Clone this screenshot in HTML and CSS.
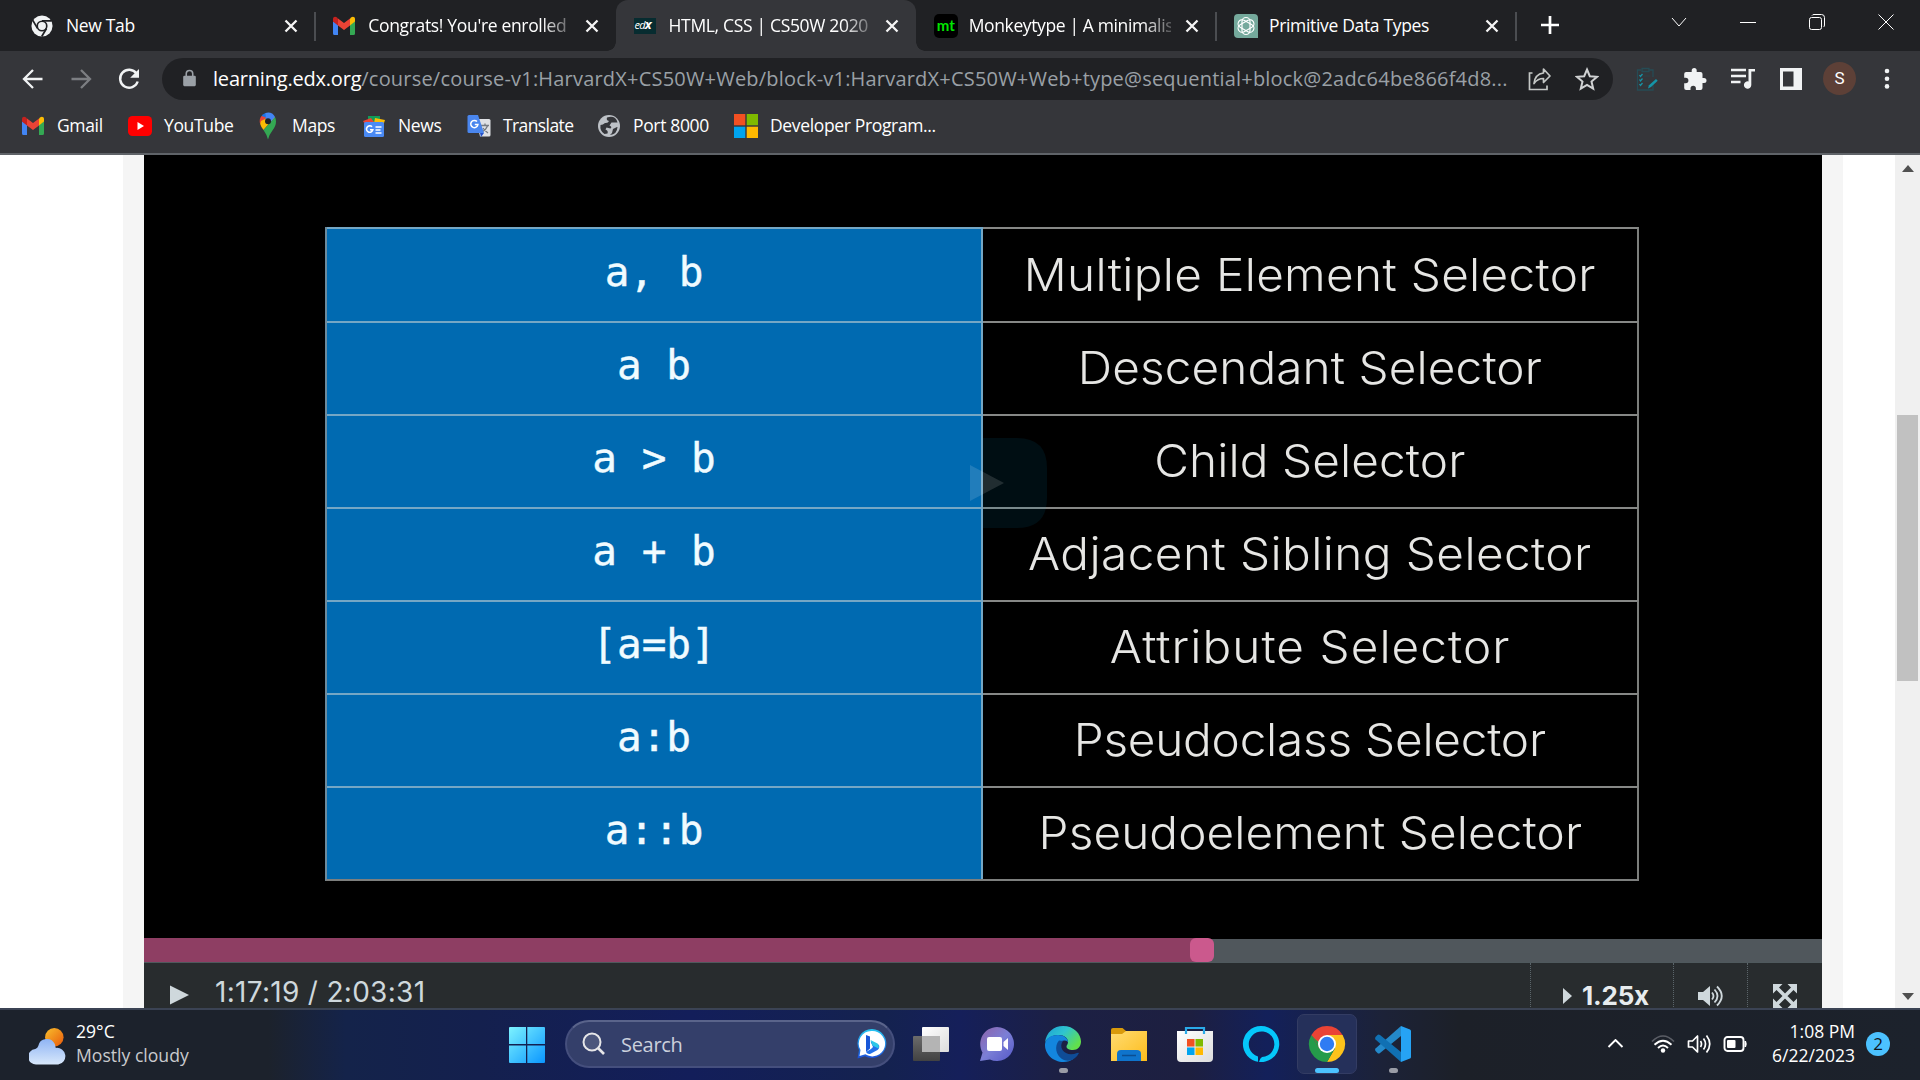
FILE: index.html
```html
<!DOCTYPE html>
<html lang="en">
<head>
<meta charset="utf-8">
<title>HTML, CSS | CS50W 2020</title>
<link rel="stylesheet" href="styles.css">
</head>
<body>
<svg width="0" height="0" class="defs">
  <defs>
    <linearGradient id="win" x1="0" y1="0" x2="1" y2="1"><stop offset="0" stop-color="#7df3ff"/><stop offset="1" stop-color="#0a96ff"/></linearGradient>
    <linearGradient id="bing" x1="0" y1="0" x2="0" y2="1"><stop offset="0" stop-color="#27c7f2"/><stop offset="1" stop-color="#1b4fd8"/></linearGradient>
    <linearGradient id="front" x1="0" y1="0" x2="1" y2="1"><stop offset="0" stop-color="#fff"/><stop offset="1" stop-color="#dcdcdc"/></linearGradient>
    <linearGradient id="back" x1="0" y1="0" x2="0" y2="1"><stop offset="0" stop-color="#6b6b6b"/><stop offset="1" stop-color="#424242"/></linearGradient>
    <linearGradient id="chat" x1="0" y1="0" x2="1" y2="1"><stop offset="0" stop-color="#8e62a8"/><stop offset=".5" stop-color="#7b7fd6"/><stop offset="1" stop-color="#5558c8"/></linearGradient>
    <linearGradient id="edgeA" x1="0" y1="0" x2="1" y2=".6"><stop offset="0" stop-color="#1b9fd6"/><stop offset=".5" stop-color="#2fc4cf"/><stop offset="1" stop-color="#62e04b"/></linearGradient>
    <linearGradient id="fold" x1="0" y1="0" x2="1" y2="1"><stop offset="0" stop-color="#ffdc72"/><stop offset="1" stop-color="#fdbc1b"/></linearGradient>
    <linearGradient id="sun" x1="0" y1="0" x2="1" y2="1"><stop offset="0" stop-color="#f9c02c"/><stop offset="1" stop-color="#e8590c"/></linearGradient>
    <linearGradient id="cloud" x1="0" y1="0" x2="0" y2="1"><stop offset="0" stop-color="#8fb4f4"/><stop offset="1" stop-color="#d8e8fb"/></linearGradient>
    <symbol id="gmail" viewBox="0 0 22 20">
      <path d="M0 3v14.500q0 1.500 1.500 1.500H5V9L0 5z" fill="#4285f4"/>
      <path d="M22 3v14.500q0 1.500-1.500 1.500H17V9l5-4z" fill="#34a853"/>
      <path d="M17 2.500V9.500l5-4V3c0-2.500-2.500-3-4-1.500z" fill="#fbbc04"/>
      <path d="M5 2.500v7l6 4.500 6-4.500v-7L11 7z" fill="#ea4335"/>
      <path d="M5 2.500v7L0 5.500V3c0-2.500 2.500-3 4-1.500z" fill="#c5221f"/>
    </symbol>
    <symbol id="close" viewBox="0 0 14 14"><path d="M1.500 1.500l11 11M12.500 1.500l-11 11" stroke="#f5f5f5" stroke-width="2.300" fill="none"/></symbol>
    <symbol id="mslogo" viewBox="0 0 24 24"><path d="M0 0h11.300v11.300H0z" fill="#f25022"/><path d="M12.700 0H24v11.300H12.700z" fill="#7fba00"/><path d="M0 12.700h11.300V24H0z" fill="#00a4ef"/><path d="M12.700 12.700H24V24H12.700z" fill="#ffb900"/></symbol>
  </defs>
</svg>
<div class="screen">
  <header class="tabstrip">
    <div class="tab first">
      <svg class="fav" viewBox="0 0 24 24"><circle cx="12" cy="12" r="11.500" fill="#f1f3f4"/><circle cx="12" cy="12" r="5.200" fill="none" stroke="#202124" stroke-width="1.800"/><path d="M12 6.300h10.500M7.100 14.600L2 5.800M16.900 14.800L11.700 23.500" stroke="#202124" stroke-width="1.900" fill="none"/></svg>
      <span class="tab-title">New Tab</span><svg class="x"><use href="#close"/></svg>
    </div>
    <div class="tab">
      <svg class="fav gm"><use href="#gmail"/></svg>
      <span class="tab-title fade">Congrats! You're enrolled</span><svg class="x"><use href="#close"/></svg>
    </div>
    <div class="tab active">
      <span class="edx">ed<b>x</b></span>
      <span class="tab-title fade">HTML, CSS | CS50W 2020</span><svg class="x"><use href="#close"/></svg>
    </div>
    <div class="tab">
      <span class="mt">mt</span>
      <span class="tab-title fade tight">Monkeytype | A minimalis</span><svg class="x"><use href="#close"/></svg>
    </div>
    <div class="tab">
      <svg class="gpt" viewBox="0 0 24 24"><path d="M4 0h16q4 0 4 4v20H4q-4 0-4-4V4q0-4 4-4z" fill="#75a99c"/><g fill="none" stroke="#fff" stroke-width="1.200"><rect id="loop" x="8" y="3.500" width="8" height="17" rx="4"/><use href="#loop" transform="rotate(60 12 12)"/><use href="#loop" transform="rotate(120 12 12)"/></g></svg>
      <span class="tab-title">Primitive Data Types</span><svg class="x"><use href="#close"/></svg>
    </div>
    <svg class="plus" viewBox="0 0 18 18"><path d="M9 0v18M0 9h18" stroke="#fff" stroke-width="2.700"/></svg>
    <div class="winctl">
      <svg width="16" height="10" viewBox="0 0 16 10"><path d="M1 1l7 8 7-8" fill="none" stroke="#fff"/></svg>
      <svg width="16" height="16" viewBox="0 0 16 16"><path d="M0 8.500h16" stroke="#fff"/></svg>
      <svg width="16" height="16" viewBox="0 0 16 16"><rect x=".5" y="3.500" width="12" height="12" rx="2" fill="none" stroke="#fff"/><path d="M3 1.500Q3.500.5 5 .5h7.500q3 0 3 3V11q0 1.500-1 2" fill="none" stroke="#fff"/></svg>
      <svg width="16" height="16" viewBox="0 0 16 16"><path d="M.5.5l15 15M15.500.5l-15 15" stroke="#fff"/></svg>
    </div>
  </header>

  <div class="toolbar">
    <svg class="nav" viewBox="0 0 24 24"><path d="M21.500 12H3.500M12 3l-9 9 9 9" fill="none" stroke="#f1f3f4" stroke-width="2.300"/></svg>
    <svg class="nav" viewBox="0 0 24 24"><path d="M2.500 12h18M12 3l9 9-9 9" fill="none" stroke="#7c7e82" stroke-width="2.300"/></svg>
    <svg class="nav" viewBox="0 0 24 24"><path d="M19.500 6.500A9 9 0 1 0 20.700 14.500" fill="none" stroke="#f1f3f4" stroke-width="2.400"/><path d="M22 2v8.800h-8.800z" fill="#f1f3f4"/></svg>
    <div class="omnibox">
      <svg class="lock" viewBox="0 0 14 18"><path d="M1.500 6.500h11q1.300 0 1.300 1.300v8.400q0 1.600-1.300 1.600h-11q-1.300 0-1.300-1.600V7.800q0-1.300 1.300-1.300z" fill="#9aa0a6"/><path d="M3.500 7V4.500a3.500 3.500 0 0 1 7 0V7" fill="none" stroke="#9aa0a6" stroke-width="1.700"/></svg>
      <span class="url"><b>learning.edx.org</b>/course/course-v1:HarvardX+CS50W+Web/block-v1:HarvardX+CS50W+Web+type@sequential+block@2adc64be866f4d8...</span>
      <svg class="share" viewBox="0 0 24 24"><path d="M4.500 6H1.500v16.500h17.500V18.500" fill="none" stroke="#c4c7c5" stroke-width="1.700"/><path d="M15.500 2l6.500 7-6.500 6.500v-4q-6 0-9.500 5 1-9.500 9.500-10.500z" fill="none" stroke="#c4c7c5" stroke-width="1.700" stroke-linejoin="round"/></svg>
      <svg class="star" viewBox="0 0 24 24"><path d="M12 2.500l2.800 6.700 7.200.6-5.500 4.700 1.700 7.100-6.200-3.800-6.200 3.800 1.700-7.100L2 9.800l7.200-.6z" fill="none" stroke="#d0d2d3" stroke-width="2"/></svg>
    </div>
    <div class="exts">
      <svg viewBox="0 0 24 24"><path d="M6 3H2.500v20H18V17M14 3h4v7M7 1.500h7v3H7z" fill="none" stroke="#264c55" stroke-width="1.300"/><path d="M8.500 9h7M8.500 14h6M8.500 19h4" stroke="#2c4147" stroke-width="1.200"/><path d="M4.500 8l1 1.500 2-2.500M4.500 12.500l1 1.500 2-2.500M4.500 17l1 1.500 2-2.500" fill="none" stroke="#1693a5" stroke-width="1.300"/><path d="M13 21.500l1-3.200 7-6.300 1.700 1.700-6.700 6.300z" fill="#1595a8"/></svg>
      <svg viewBox="0 0 24 24"><path d="M21 11h-1.500V7a2 2 0 0 0-2-2H13.700V3.500a2.500 2.500 0 0 0-5 0V5H3.200a2 2 0 0 0-2 2v3.800h1.500a2.700 2.700 0 0 1 0 5.400H1.200V21a2 2 0 0 0 2 2h4.300v-1.500a2.700 2.700 0 0 1 5.400 0V23h4.600a2 2 0 0 0 2-2v-5H21a2.500 2.500 0 0 0 0-5z" fill="#f1f3f4"/></svg>
      <svg viewBox="0 0 24 24"><path d="M0 3h15M0 9h15M0 15h9.500" stroke="#f1f3f4" stroke-width="2.300"/><path d="M17.500 2H24v2.500h-3.700v13.500a3.700 3.700 0 1 1-2.800-3.600z" fill="#f1f3f4"/></svg>
      <svg viewBox="0 0 24 24"><path d="M1 1h22v22H1zM4 4.500v15h10.500v-15z" fill="#f1f3f4" fill-rule="evenodd"/></svg>
      <span class="avatar">S</span>
      <svg class="dots" viewBox="0 0 6 24"><circle cx="3" cy="4" r="2.300" fill="#f1f3f4"/><circle cx="3" cy="11.700" r="2.300" fill="#f1f3f4"/><circle cx="3" cy="19.400" r="2.300" fill="#f1f3f4"/></svg>
    </div>
  </div>

  <nav class="bookmarks">
    <div class="bm b1"><svg class="bi"><use href="#gmail"/></svg><span>Gmail</span></div>
    <div class="bm b2"><svg class="bi" viewBox="0 0 24 20"><rect y="0" width="24" height="20" rx="4.500" fill="#f00"/><path d="M9.500 6v8l6.500-4z" fill="#fff"/></svg><span>YouTube</span></div>
    <div class="bm b3"><svg class="bi" viewBox="0 0 24 28"><path d="M9.500 1A9 9 0 0 0 5.500 4L10 9l4-7z" fill="#1a73e8"/><path d="M5.500 4A8.500 8.500 0 0 0 4.200 12l6-6.500z" fill="#ea4335"/><path d="M4.200 12Q5 15 7.500 18L19 5l-8 1-6 3z" fill="#fbbc04"/><path d="M7.500 18q3.200 4.500 4.500 9.500 1.300-5 4.300-8.700Q20 14 20 9.500 20 7 19 5z" fill="#34a853"/><path d="M9.500 1q6.500-1.700 9.500 4l-5.500 6L10 9z" fill="#4285f4"/><circle cx="12" cy="9.300" r="3" fill="#202124"/></svg><span>Maps</span></div>
    <div class="bm b4"><svg class="bi" viewBox="0 0 24 24"><path d="M6 2h12v8H6z" fill="#0f9d58"/><path d="M1 7l8-3 6 8H4z" fill="#ea4335"/><path d="M13 4l10 2-3 9h-9z" fill="#fbbc04"/><rect x="2" y="8" width="20" height="15" rx="1.500" fill="#4a8af4"/><path d="M10 12.800a3.200 3.200 0 1 0 .8 3H8M13.500 13h6M13.500 16h5M13.500 19h6" fill="none" stroke="#fff" stroke-width="1.600"/></svg><span>News</span></div>
    <div class="bm b5"><svg class="bi" viewBox="0 0 24 24"><path d="M9 5h13q1.500 0 1.500 1.500V21q0 1.500-1.500 1.500h-9z" fill="#dfe1e5"/><path d="M14 11.500h8M18 9.500v2M20.500 12q-1.500 4-5.500 6M16 14q2 3 5 5" fill="none" stroke="#757b83" stroke-width="1.300"/><path d="M2 1h9l6 18H2Q.5 19 .5 17.500v-15Q.5 1 2 1z" fill="#4a86ee"/><path d="M13 19h4l-3 4z" fill="#2350c8"/><path d="M10 7.600a3.600 3.600 0 1 0 .9 3H7.800" fill="none" stroke="#fff" stroke-width="1.500"/></svg><span>Translate</span></div>
    <div class="bm b6"><svg class="bi" viewBox="0 0 24 24"><circle cx="12" cy="12" r="11" fill="#bdc1c6"/><path d="M10 3.500q-1 3 2 3.500-1 2.500-4 2-2 2-4.500 2-1 6 4 9l3-.5q1-3-2-4l1-2 4 1q2-1.500-1-3l2-3h6q-.500-3-2.500-4.500-3-2-8-.5zM20 13l-4 2-1 4-2 2q7-.500 7.500-8z" fill="#35363a"/></svg><span>Port 8000</span></div>
    <div class="bm b7"><svg class="bi"><use href="#mslogo"/></svg><span>Developer Program...</span></div>
  </nav>

  <main class="page">
    <div class="gutter left"></div>
    <section class="player">
      <div class="video">
        <div class="slide">
          <div class="code">a, b</div><div class="name n1"><span>Multiple Element Selector</span></div>
          <div class="code">a b</div><div class="name n2"><span>Descendant Selector</span></div>
          <div class="code">a &gt; b</div><div class="name n3"><span>Child Selector</span></div>
          <div class="code">a + b</div><div class="name n4"><span>Adjacent Sibling Selector</span></div>
          <div class="code">[a=b]</div><div class="name n5"><span>Attribute Selector</span></div>
          <div class="code">a:b</div><div class="name n6"><span>Pseudoclass Selector</span></div>
          <div class="code">a::b</div><div class="name n7"><span>Pseudoelement Selector</span></div>
        </div>
        <svg class="bigplay" viewBox="0 0 130 90"><path d="M66 0h34q30 0 30 30v30q0 30-30 30H66z" fill="#05a0d0" fill-opacity=".09"/><path d="M53 27v36l34-18z" fill="#fff" fill-opacity=".13"/></svg>
      </div>
      <div class="progress"><div class="played"></div><div class="knob"></div></div>
      <div class="controls">
        <svg class="play" viewBox="0 0 20 20"><path d="M0 0v20l20-10z" fill="#cfd8dc"/></svg>
        <span class="time">1:17:19 / 2:03:31</span>
        <div class="ctl speed"><svg width="9" height="16" viewBox="0 0 9 16"><path d="M0 0v16l9-8z" fill="#cfd8dc"/></svg><span>1.25x</span></div>
        <div class="ctl vol"><svg width="26" height="22" viewBox="0 0 26 22"><path d="M0 7h5l7-6v20l-7-6H0z" fill="#cfd8dc"/><path d="M14 7.500q3 3.500 0 7M16.500 4.500q6 6.500 0 13M19 1.500q9.500 9.500 0 19" fill="none" stroke="#cfd8dc" stroke-width="1.800"/></svg></div>
        <div class="ctl full"><svg width="24" height="24" viewBox="0 0 24 24"><path d="M4 4l16 16M20 4L4 20" stroke="#cfd8dc" stroke-width="3.600"/><path d="M0 0h9.500L0 9.500zM24 0v9.500L14.500 0zM0 24v-9.500L9.500 24zM24 24h-9.500l9.500-9.500z" fill="#cfd8dc"/></svg></div>
      </div>
    </section>
    <div class="gutter right"></div>
    <div class="scroll">
      <svg width="12" height="7" viewBox="0 0 12 7"><path d="M6 0l6 7H0z" fill="#505050"/></svg>
      <div class="thumb"></div>
      <svg width="12" height="7" viewBox="0 0 12 7"><path d="M6 7L0 0h12z" fill="#505050"/></svg>
    </div>
  </main>

  <footer class="taskbar">
    <div class="weather">
      <svg width="37" height="38" viewBox="0 0 38 38"><circle cx="26" cy="10" r="9.500" fill="url(#sun)"/><path d="M8 38a8 8 0 0 1-1.500-16Q9 21 9.500 19a9 9 0 0 1 17-2l1 4a8.500 8.500 0 0 1 2.500 17z" fill="url(#cloud)"/></svg>
      <div class="wtext"><span class="w1">29°C</span><span class="w2">Mostly cloudy</span></div>
    </div>
    <div class="apps">
      <svg class="start" viewBox="0 0 36 36"><path d="M1 0h16v17H0V1q0-1 1-1zM18.300 0H35q1 0 1 1v16H18.300zM0 18.500h17V36H1q-1 0-1-1zM18.300 18.500H36V35q0 1-1 1H18.300z" fill="url(#win)"/></svg>
      <div class="search">
        <svg width="24" height="24" viewBox="0 0 24 24"><circle cx="10" cy="10" r="8.500" fill="#fff" fill-opacity=".12" stroke="#e6e6e8" stroke-width="2"/><path d="M16 16l6 6" stroke="#e6e6e8" stroke-width="2.600"/></svg>
        <span>Search</span>
        <svg class="bing" viewBox="0 0 30 30"><path d="M15 0a14.500 14.500 0 1 1-7 27.300L.5 29.500 2 21A14.500 14.500 0 0 1 15 0z" fill="url(#bing)"/><path d="M15 2a12.700 12.700 0 1 1-6.600 23.300L2.500 27l1-6A12.700 12.700 0 0 1 15 2z" fill="#fff"/><path d="M9 6l4 1.500v12l-4 3.500z" fill="#1857d8"/><path d="M9 23l5-3 2-2-2.500-5.500L22 16q1 3-1.500 5L14 24.500q-3 1.500-5-1.500z" fill="#2270ea"/><path d="M13.500 11l7 3.500q2 1.500 1 5l-4-2-2-1z" fill="#2cc7e8"/></svg>
      </div>
      <div class="app a1"><svg viewBox="0 0 36 36"><rect x="0" y="10" width="27" height="25" rx="1" fill="url(#back)"/><rect x="9" y="1" width="27" height="25" rx="1" fill="url(#front)"/><path d="M9 10h18v16H9z" fill="#b4b4b4"/></svg></div>
      <div class="app a2"><svg viewBox="0 0 36 36"><path d="M18 1a17 17 0 1 1-7 32.500L1 35l2.500-8.500A17 17 0 0 1 18 1z" fill="url(#chat)"/><rect x="8" y="11" width="15" height="14" rx="2" fill="#fff"/><path d="M24.500 16l4.500-4v12l-4.500-4z" fill="#fff"/></svg></div>
      <div class="app a3"><svg viewBox="0 0 36 36"><path d="M0 17C1 6 9 0 18 0c11 0 18 8 18 15.500 0 5-3.500 8.500-8 8.500-4 0-6.500-1.500-6.500-3.500 0-1.500 1.500-2 1.500-4.500 0-4-4-7-9-7C7 9 1.500 12 0 17z" fill="url(#edgeA)"/><path d="M0 18C1 12 6 9 13 9c6 0 10 3.500 10 7q-3-2.500-7-.500c-4 2.500-4 10 1 14.500 4 3.500 8 4 12 2.500Q24 36 18.500 36C8 36-.5 28 0 18z" fill="#1386de"/><path d="M14 14.500c-5 6-3 14.500 3 18.500 5 3 10 1.500 13-1q2.500-2 4-5-1-.5-2 0c-6 2.500-12 1-14.500-3-2-3-1.500-6.500.5-9z" fill="#0f4c96"/></svg><i></i></div>
      <div class="app a4"><svg viewBox="0 0 36 36"><path d="M0 4q0-2 2-2h9.500l3.500 3v6H0z" fill="#d99a0b"/><path d="M0 8h11l4-3h21v30H0z" fill="url(#fold)"/><path d="M6 35v-7q0-4 4-4h16q4 0 4 4v7z" fill="#0f74cc"/><path d="M11 29.500h14" stroke="#0b4e92" stroke-width="1.500"/></svg></div>
      <div class="app a5"><svg viewBox="0 0 36 36"><path d="M0 5h36v27q0 4-4 4H4q-4 0-4-4z" fill="url(#front)"/><path d="M9 8V2h18v6" fill="none" stroke="#2aaae8" stroke-width="2.200"/><svg x="10" y="13" width="16" height="16"><use href="#mslogo"/></svg></svg></div>
      <div class="app a6"><svg viewBox="0 0 36 36"><path d="M18 0a18 18 0 1 1-3 35.700v-5.200A12.800 12.800 0 1 1 19 31q-2 1-3 4.900A18 18 0 0 1 18 0z" fill="#05c8fb" fill-rule="evenodd"/></svg></div>
      <div class="app a7 current"><svg viewBox="0 0 36 36"><path d="M18 18L2.400 9A18 18 0 0 1 33.600 9z" fill="#ea4335"/><path d="M18 18V9h15.600A18 18 0 0 1 18 36l7.800-13.500z" fill="#fcc21b"/><path d="M18 18l7.800 4.500L18 36A18 18 0 0 1 2.400 9l7.800 13.500z" fill="#259b4a"/><path d="M2.400 9l7.800 13.500L18 9z" fill="#ea4335"/><path d="M2.400 9l7.800 13.500L14 20 6 13z" fill="#259b4a"/><circle cx="18" cy="18" r="9" fill="#fff"/><circle cx="18" cy="18" r="7.200" fill="#2f7cf3"/></svg><i></i></div>
      <div class="app a8"><svg viewBox="0 0 36 36"><path d="M26 0v10L5 27q-1.500 1-2.500 0L.5 25q-1-1.300 0-2.500z" fill="#2489ca"/><path d="M26 36V26L5 9Q3.500 8 2.500 9L.5 11q-1 1.300 0 2.500z" fill="#1070b3"/><path d="M26 0l9 3.500q1 .500 1 1.500v26q0 1-1 1.500L26 36z" fill="#26a3f4"/></svg><i></i></div>
    </div>
    <div class="tray">
      <svg class="chev" viewBox="0 0 16 9"><path d="M1 8l7-7 7 7" fill="none" stroke="#fff" stroke-width="1.900"/></svg>
      <svg class="wifi" viewBox="0 0 24 18"><path d="M1 6.500q11-11 22 0" fill="none" stroke="#5b5e66" stroke-width="1.700"/><path d="M3.500 9.800q8.500-8 17 0M7 13q5-5 10 0" fill="none" stroke="#fff" stroke-width="1.900"/><circle cx="12" cy="15.500" r="2.200" fill="#fff"/></svg>
      <svg class="spk" viewBox="0 0 24 20"><path d="M1 7h4l5-5v16l-5-5H1z" fill="none" stroke="#fff" stroke-width="1.700" stroke-linejoin="round"/><path d="M13 7q2 3 0 6M16 4.500q4 5.500 0 11M19 1.500q6.500 8.500 0 17" fill="none" stroke="#fff" stroke-width="1.700"/></svg>
      <svg class="bat" viewBox="0 0 24 16"><rect x="1" y="1" width="19" height="14" rx="3" fill="none" stroke="#fff" stroke-width="1.900"/><rect x="3.500" y="4" width="8.500" height="8" rx="1" fill="#fff"/><path d="M21 5h1.500q1.500 3 0 6H21z" fill="#fff"/></svg>
      <div class="clock"><span class="c1">1:08 PM</span><span class="c2">6/22/2023</span></div>
      <span class="badge">2</span>
    </div>
  </footer>
</div>
</body>
</html>
```
FILE: styles.css
```css
* { box-sizing: border-box; }
html, body { margin: 0; padding: 0; overflow: hidden; }
body { background: #fff; font-family: "Open Sans", "Noto Sans", sans-serif; color: #fff; }
svg { display: block; flex: none; }
.defs { position: absolute; }
.screen { width: 1920px; height: 1080px; display: flex; flex-direction: column; overflow: hidden; }
span { white-space: nowrap; }

.tabstrip { height: 51px; background: #202124; display: flex; flex: none; padding-left: 15px; }
.tab { width: 300.250px; height: 51px; display: flex; align-items: center; padding: 0 17px 0 18px; position: relative; flex: none; font-size: 17.500px; letter-spacing: -.33px; }
.tab.first { padding-left: 16px; }
.tab::after { content: ""; position: absolute; right: -1px; top: 12px; width: 2px; height: 29px; background: #4b4d51; }
.tab:nth-child(2)::after, .tab:nth-child(3)::after { display: none; }
.tab.active { background: #35363a; border-radius: 12px 12px 0 0; }
.tab.active::before { content: ""; position: absolute; left: -9px; right: -9px; bottom: 0; height: 9px; background: radial-gradient(circle at 0 0, transparent 8.500px, #35363a 9px) left / 9px 9px no-repeat, radial-gradient(circle at 100% 0, transparent 8.500px, #35363a 9px) right / 9px 9px no-repeat; }
.fav { width: 22px; height: 24px; }
.fav.gm { height: 20px; }
.gpt { width: 24px; height: 24px; margin-right: -2px; }
.tab .x { width: 14px; height: 14px; margin-left: auto; }
.tab-title { margin: -1px 0 0 13px; width: 202px; overflow: hidden; line-height: 26px; }
.tight { letter-spacing: -.38px; }
.fade { -webkit-mask-image: linear-gradient(90deg, #000 86%, rgba(0,0,0,.25)); mask-image: linear-gradient(90deg, #000 86%, rgba(0,0,0,.25)); }
.edx { width: 22px; height: 16px; background: #072c30; color: #fff; font-size: 11px; line-height: 14px; font-style: italic; letter-spacing: -.8px; padding-left: 1px; }
.edx b { font-size: 13px; line-height: 10px; }
.mt { width: 24px; height: 24px; margin-right: -2px; border-radius: 5px; background: #000; color: #00e600; font-size: 15px; line-height: 22px; text-align: center; font-weight: 700; font-family: Lato, sans-serif; letter-spacing: 0; }
.plus { width: 18px; height: 18px; margin: 16px 0 0 25px; }
.winctl { display: flex; margin-left: auto; padding-right: 26px; gap: 53px; height: 43px; align-items: center; }

.toolbar { height: 55px; background: #35363a; display: flex; flex: none; align-items: center; padding: 0 20px 0 21px; }
.nav { width: 24px; height: 24px; margin-right: 24px; }
.omnibox { width: 1451px; height: 42px; margin-left: -3px; background: #202124; border-radius: 21px; display: flex; align-items: center; padding: 0 14px 0 21px; }
.lock { width: 13px; height: 18px; margin-right: 17px; margin-top: -2px; }
.url { font-size: 20px; color: #9aa0a6; width: 1298px; letter-spacing: .2px; }
.url b { font-weight: 400; color: #fff; letter-spacing: -.2px; }
.share { width: 24px; height: 26px; margin-left: 17px; }
.star { width: 24px; height: 26px; margin-left: auto; }
.exts { display: flex; align-items: center; flex: 1; gap: 24px; padding-left: 22px; }
.exts svg { width: 24px; height: 24px; }
.exts svg.dots { width: 6px; margin-left: 4px; }
.avatar { width: 33px; height: 33px; margin-left: -4px; border-radius: 50%; background: #5d4037; text-align: center; line-height: 33px; font-size: 17px; font-family: Roboto, sans-serif; }

.bookmarks { height: 49px; background: #35363a; border-bottom: 2px solid #5f6368; flex: none; display: flex; align-items: flex-start; padding: 6px 0 0 21px; font-size: 17.500px; letter-spacing: -.35px; }
.bm { display: flex; align-items: center; height: 28px; gap: 12px; }
.bm span { margin-top: -2px; }
.bi { width: 24px; height: 24px; }
.b1 { width: 107px; } .b1 .bi { width: 24px; height: 20px; }
.b2 { width: 128px; } .b2 .bi { height: 20px; }
.b3 { width: 106px; } .b3 .bi { height: 28px; }
.b4 { width: 105px; }
.b5 { width: 130px; }
.b5 span { letter-spacing: -.6px; }
.b6 { width: 137px; }

.page { height: 853px; flex: none; display: flex; background: #fff; padding-left: 123px; overflow: hidden; }
.gutter { width: 21px; background: #f5f5f5; }
.player { width: 1678px; display: flex; flex-direction: column; }
.video { height: 783px; background: #000; padding: 72px 0 0 181px; position: relative; flex: none; }
.slide { width: 1314px; height: 654px; display: grid; grid-template-columns: 656px 656px; grid-template-rows: 94px repeat(6, 93px); border: 2px solid; border-width: 0 0 2px 2px; border-color: transparent transparent #7d7f7e #6c8a9c; }
.slide > div { display: flex; align-items: center; justify-content: center; border-top: 2px solid #868886; border-right: 2px solid #7c7e7c; white-space: pre; }
.slide .code { background: #006ab1; border-color: #75a7c5; font: 41px "DejaVu Sans Mono", monospace; color: #f0fbff; padding-bottom: 7px; -webkit-text-stroke: .4px #f0fbff; }
.slide .name { font: 300 45px Inter, sans-serif; color: #e6e6e4; padding-bottom: 2px; }
/* stretched slightly to give the light face a wide, geometric look */
.name span { transform: scaleX(1.06); }
.n1 { letter-spacing: .3px; }
.n2 { letter-spacing: .1px; }
.n3 { letter-spacing: .1px; }
.n4 { letter-spacing: .4px; }
.n5 { letter-spacing: 1px; }
.n6 { letter-spacing: -.2px; }
.n7 { letter-spacing: .1px; }
.bigplay { position: absolute; left: 773px; top: 283px; width: 130px; height: 90px; }
.progress { height: 25px; background: linear-gradient(#000 1px, #50575c 1px); border-bottom: 1px solid #4f595d; flex: none; display: flex; }
.played { width: 1058px; margin-right: -12px; background: #8e3e63; }
.knob { width: 24px; height: 24px; border-radius: 6px; background: #cb598d; }
.controls { flex: 1; background: #282c2e; display: flex; padding: 0 1px 0 26px; overflow: hidden; }
.play { width: 19px; height: 20px; margin-top: 22px; }
.time { font: 28px/34px Inter, sans-serif; color: #cfd8dc; letter-spacing: .3px; margin: 12px auto 0 26px; }
.ctl { border-left: 1px dotted #5b656a; height: 60px; }
.ctl svg { display: inline-block; }
.speed { width: 143px; padding: 20px 0 0 32px; font: 700 26px/24px Inter, sans-serif; color: #e7ecee; display: flex; gap: 10px; letter-spacing: -.2px; }
.speed svg { margin-top: 5px; }
.speed span { height: 24px; margin-top: 1px; }
.vol { width: 74px; padding: 22px 0 0 24px; }
.full { width: 74px; padding: 21px 0 0 25px; }
.scroll { margin-left: auto; width: 25px; background: #f0f0f0; display: flex; flex-direction: column; align-items: center; padding: 10px 0 8px; }
.thumb { width: 21px; height: 266px; background: #c1c1c1; margin: 243px 0 auto; }

.taskbar { flex: 1; border-top: 2px solid #3b4354; display: flex; background: linear-gradient(90deg, #1c222c 0, #1c222c 14%, #14234a 18%, #14204e 25%, #131e5a 36%, #14224f 46%, #151f5a 50%, #1c2044 55%, #1d1f40 62%, #13205a 66%, #1c2238 72%, #1c2028 76%, #1c222c 100%); }
.weather { display: flex; width: 509px; padding: 17px 0 0 29px; gap: 10px; }
.wtext { display: flex; flex-direction: column; font-size: 17.600px; line-height: 24px; margin-top: -8px; }
.w2 { color: #c9cacd; }
.apps { display: flex; }
.start { width: 36px; height: 36px; margin-top: 17px; }
.search { width: 330px; height: 48px; margin: 10px 0 0 20px; border-radius: 24px; background: #343f6a; border: 2px solid #454f7d; border-top-color: #5a648b; display: flex; align-items: center; padding: 0 6px 0 15px; }
.search span { margin-left: 15px; font-size: 20px; color: #cbd0dc; letter-spacing: -.3px; }
.bing { width: 30px; height: 30px; margin-left: auto; }
.app { width: 60px; height: 60px; margin-top: 4px; margin-right: 6px; border-radius: 7px; display: flex; flex-direction: column; align-items: center; padding-top: 12px; }
.app svg { width: 36px; height: 36px; overflow: visible; }
.app > svg svg { width: 16px; height: 16px; }
.app i { width: 9px; height: 5px; border-radius: 3px; background: #9a9ca6; margin-top: 6px; }
.a1 { margin-left: 6px; }
.a7 { background: #25305a; border: 1px solid #333c63; padding-top: 11px; }
.a7 i { width: 24px; background: #4cc2ff; }
.tray { margin-left: auto; display: flex; padding-right: 30px; }
.chev { width: 17px; height: 9px; margin: 29px 27px 0 0; }
.wifi { width: 24px; height: 18px; margin: 25px 12px 0 0; }
.spk { width: 25px; height: 20px; margin: 24px 11px 0 0; }
.bat { width: 25px; height: 16px; margin: 26px 24px 0 0; }
.clock { width: 83px; display: flex; flex-direction: column; align-items: flex-end; font-size: 17.500px; line-height: 24px; padding-top: 9px; }
.badge { width: 24px; height: 24px; border-radius: 50%; background: #4cc2ff; color: #10151c; font-size: 17px; line-height: 24px; text-align: center; margin: 22px 0 0 11px; }
```
